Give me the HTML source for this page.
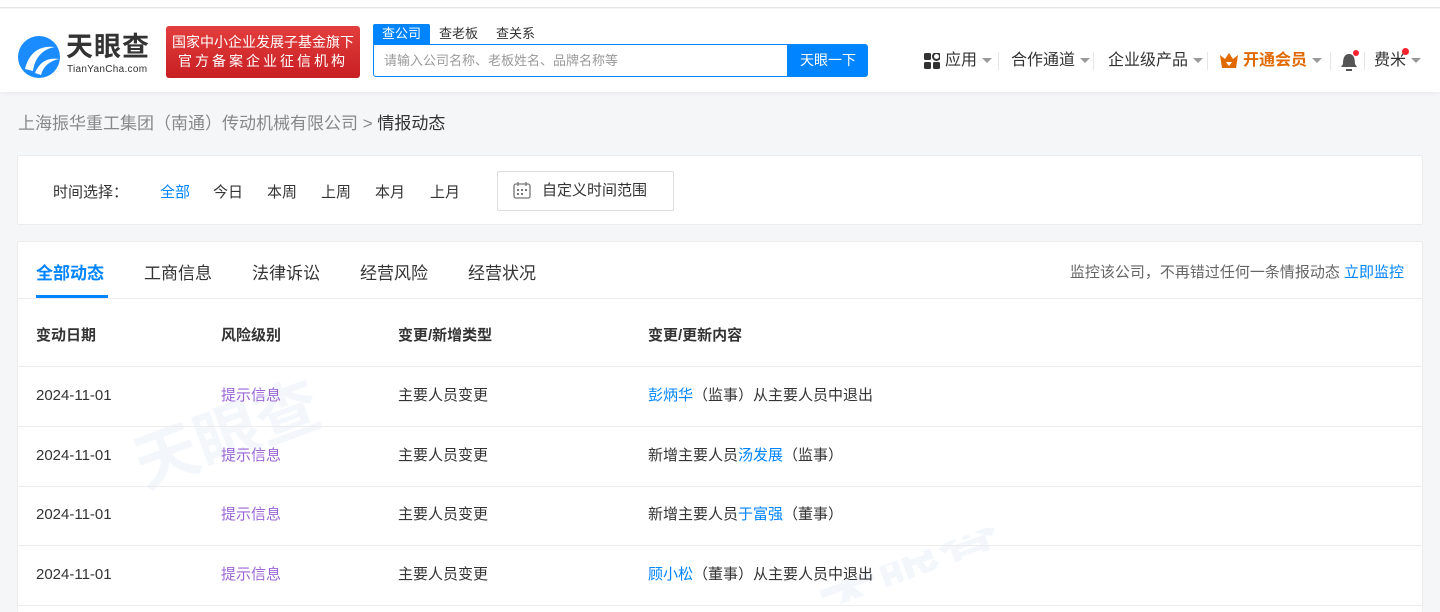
<!DOCTYPE html>
<html><head><meta charset="utf-8"><style>
*{margin:0;padding:0;box-sizing:border-box}
html,body{width:1440px;height:612px;overflow:hidden}
body{background:#f5f6f8;font-family:"Liberation Sans","Noto Sans CJK SC",sans-serif;color:#333;position:relative}
.top{position:absolute;left:0;top:0;width:1440px;height:8px;background:#fff;border-bottom:1px solid #e4e4e4}
.hdr{position:absolute;left:0;top:9px;width:1440px;height:83px;background:#fff;box-shadow:0 2px 4px rgba(0,0,0,.04)}
.abs{position:absolute;white-space:nowrap}
.badge{left:166px;top:26px;width:194px;height:52px;background:linear-gradient(#e33e3e,#c81f22);border-radius:3px;color:#fff;font-size:14px;line-height:19px;text-align:center;padding-top:7px}
.tabs{left:373px;top:24px;font-size:13px}
.tabs span{display:inline-block;padding:0 9px;height:20px;line-height:20px;color:#333}
.tabs .on{background:#0084ff;color:#fff;border-radius:2px 2px 0 0}
.search{left:373px;top:44px;width:415px;height:33px;border:1px solid #0084ff;border-radius:0 0 0 3px;font-size:13px;color:#999;line-height:31px;padding-left:10px}
.btn{left:788px;top:44px;width:80px;height:33px;background:#0084ff;color:#fff;font-size:14px;line-height:33px;text-align:center;border-radius:0 3px 3px 0}
.nav{top:50px;font-size:16px;color:#333;line-height:22px}
.caret{display:inline-block;width:0;height:0;border:5px solid transparent;border-top:5px solid #999;border-bottom:none;vertical-align:middle;margin-left:5px}
.sep{top:52px;width:1px;height:18px;background:#e6e6e6}
.crumb{left:18px;top:109px;font-size:17px;color:#888}
.card{background:#fff;border:1px solid #ececec;border-radius:2px}
.f{top:181px;font-size:15px}
.row{position:absolute;left:18px;width:1404px;border-top:1px solid #ececec;font-size:15px}
.row span{position:absolute;line-height:20px}
.blue{color:#0084ff}.purple{color:#9a66d6}
</style></head><body>
<div class="top"></div>
<div class="hdr"></div>
<svg class="abs" style="left:17px;top:35px" width="44" height="44" viewBox="0 0 44 44"><circle cx="22" cy="22" r="21" fill="#1a8cff"/><path d="M8 34 C12 18 22 10 38 12 C26 14 18 22 16 36Z" fill="#fff"/><path d="M18 38 C22 28 30 22 42 24 C32 26 26 32 24 40Z" fill="#fff"/></svg>
<div class="abs" style="left:66px;top:32px;font-size:27px;line-height:30px;font-weight:bold;color:#333;letter-spacing:1px">天眼查</div>
<div class="abs" style="left:67px;top:65px;font-size:10px;line-height:10px;color:#333;letter-spacing:.3px">TianYanCha.com</div>
<div class="abs badge">国家中小企业发展子基金旗下<br><span style="letter-spacing:3px">官方备案企业征信机构</span></div>
<div class="abs tabs"><span class="on">查公司</span><span>查老板</span><span>查关系</span></div>
<div class="abs search">请输入公司名称、老板姓名、品牌名称等</div>
<div class="abs btn">天眼一下</div>
<svg class="abs" style="left:924px;top:53px" width="16" height="16"><rect x="0" y="0" width="7" height="7" rx="1.5" fill="#333"/><rect x="9" y="0" width="7" height="7" rx="3.5" fill="none" stroke="#333" stroke-width="2"/><rect x="0" y="9" width="7" height="7" rx="1.5" fill="#333"/><rect x="9" y="9" width="7" height="7" rx="1.5" fill="#333"/></svg>
<div class="abs nav" style="left:945px">应用<i class="caret"></i></div>
<div class="abs sep" style="left:998px"></div>
<div class="abs nav" style="left:1011px">合作通道<i class="caret"></i></div>
<div class="abs sep" style="left:1093px"></div>
<div class="abs nav" style="left:1108px">企业级产品<i class="caret"></i></div>
<div class="abs sep" style="left:1207px"></div>
<svg class="abs" style="left:1220px;top:53px" width="18" height="15"><path d="M0 2 L5 6 L9 0 L13 6 L18 2 L16 15 L2 15Z" fill="#e06a00"/><path d="M6 9 L9 13 L12 9Z" fill="#fff"/></svg>
<div class="abs nav" style="left:1243px;color:#e06a00;font-weight:bold">开通会员<i class="caret"></i></div>
<div class="abs sep" style="left:1330px"></div>
<svg class="abs" style="left:1340px;top:50px" width="20" height="22"><path d="M9 4 C4 4 3 9 3 14 L1 17 L17 17 L15 14 C15 9 14 4 9 4Z" fill="#555"/><rect x="6" y="19" width="6" height="2" fill="#555"/><circle cx="16" cy="3" r="3" fill="#f5222d"/></svg>
<div class="abs sep" style="left:1364px"></div>
<div class="abs nav" style="left:1374px">费米<i class="caret"></i></div>
<div class="abs" style="left:1402px;top:48px;width:7px;height:7px;border-radius:50%;background:#f5222d"></div>

<div class="abs crumb">上海振华重工集团（南通）传动机械有限公司 &gt; <span style="color:#333">情报动态</span></div>

<div class="abs card" style="left:17px;top:155px;width:1406px;height:70px"></div>
<div class="abs f" style="left:53px;color:#333">时间选择：</div>
<div class="abs f blue" style="left:160px">全部</div>
<div class="abs f" style="left:213px">今日</div>
<div class="abs f" style="left:267px">本周</div>
<div class="abs f" style="left:321px">上周</div>
<div class="abs f" style="left:375px">本月</div>
<div class="abs f" style="left:430px">上月</div>
<div class="abs" style="left:497px;top:171px;width:177px;height:40px;border:1px solid #ddd;border-radius:2px"></div>
<svg class="abs" style="left:513px;top:181px" width="18" height="18"><rect x="1" y="3" width="16" height="14" rx="2" fill="none" stroke="#777" stroke-width="1.3"/><line x1="5" y1="1" x2="5" y2="5" stroke="#777" stroke-width="1.3"/><line x1="13" y1="1" x2="13" y2="5" stroke="#777" stroke-width="1.3"/><g fill="#777"><rect x="4" y="8" width="2" height="2"/><rect x="8" y="8" width="2" height="2"/><rect x="12" y="8" width="2" height="2"/><rect x="4" y="12" width="2" height="2"/><rect x="8" y="12" width="2" height="2"/></g></svg>
<div class="abs f" style="left:542px;top:179px">自定义时间范围</div>

<div class="abs card" style="left:17px;top:241px;width:1406px;height:371px;border-bottom:none"></div>
<div class="abs" style="left:18px;top:298px;width:1404px;height:1px;background:#ececec"></div>
<div class="abs" style="left:36px;top:259px;font-size:17px;color:#0084ff;font-weight:bold">全部动态</div>
<div class="abs" style="left:36px;top:295px;width:72px;height:3px;background:#0084ff"></div>
<div class="abs" style="left:144px;top:259px;font-size:17px">工商信息</div>
<div class="abs" style="left:252px;top:259px;font-size:17px">法律诉讼</div>
<div class="abs" style="left:360px;top:259px;font-size:17px">经营风险</div>
<div class="abs" style="left:468px;top:259px;font-size:17px">经营状况</div>
<div class="abs" style="right:36px;top:261px;font-size:15px;color:#666">监控该公司，不再错过任何一条情报动态 <span class="blue">立即监控</span></div>

<div class="abs" style="left:125px;top:435px;font-size:64px;line-height:70px;font-weight:bold;color:#f3f7fc;transform:rotate(-20deg);transform-origin:left top">天眼查</div>
<div class="abs" style="left:815px;top:590px;font-size:64px;line-height:22px;height:22px;overflow:hidden;font-weight:bold;color:#f3f7fc;transform:rotate(-20deg);transform-origin:left top">天眼查</div>

<div class="row" style="top:300px;height:67px;font-weight:bold;border-top:none"><span style="left:18px;top:26px">变动日期</span><span style="left:203px;top:26px">风险级别</span><span style="left:380px;top:26px">变更/新增类型</span><span style="left:630px;top:26px">变更/更新内容</span></div>
<div class="row" style="top:366px;height:60px"><span style="left:18px;top:19px">2024-11-01</span><span class="purple" style="left:203px;top:19px">提示信息</span><span style="left:380px;top:19px">主要人员变更</span><span style="left:630px;top:19px"><b class="blue" style="font-weight:normal">彭炳华</b>（监事）从主要人员中退出</span></div>
<div class="row" style="top:426px;height:60px"><span style="left:18px;top:19px">2024-11-01</span><span class="purple" style="left:203px;top:19px">提示信息</span><span style="left:380px;top:19px">主要人员变更</span><span style="left:630px;top:19px">新增主要人员<b class="blue" style="font-weight:normal">汤发展</b>（监事）</span></div>
<div class="row" style="top:486px;height:60px"><span style="left:18px;top:18px">2024-11-01</span><span class="purple" style="left:203px;top:18px">提示信息</span><span style="left:380px;top:18px">主要人员变更</span><span style="left:630px;top:18px">新增主要人员<b class="blue" style="font-weight:normal">于富强</b>（董事）</span></div>
<div class="row" style="top:545px;height:60px"><span style="left:18px;top:19px">2024-11-01</span><span class="purple" style="left:203px;top:19px">提示信息</span><span style="left:380px;top:19px">主要人员变更</span><span style="left:630px;top:19px"><b class="blue" style="font-weight:normal">顾小松</b>（董事）从主要人员中退出</span></div>
<div class="row" style="top:605px;height:7px"></div>
</body></html>
